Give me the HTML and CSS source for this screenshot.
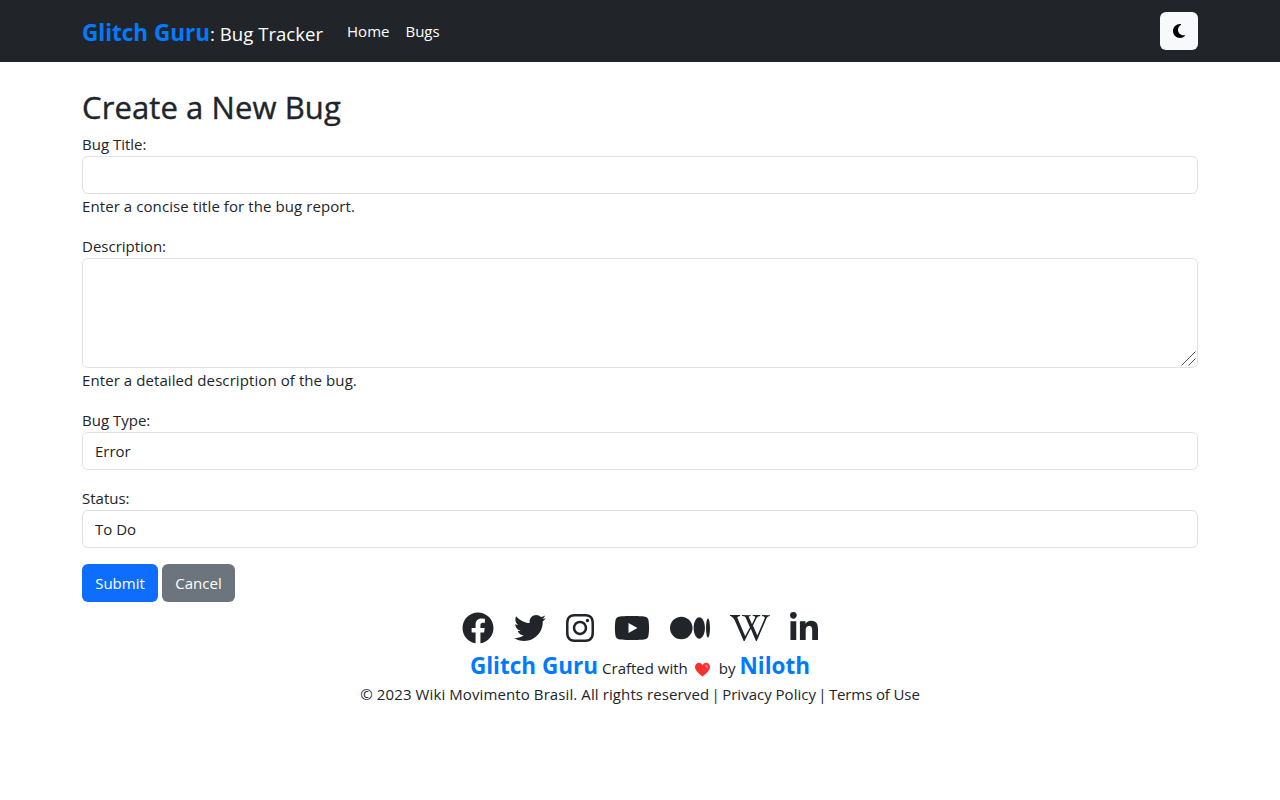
FILE: index.html
```html
<!DOCTYPE html>
<html lang="en">
<head>
<meta charset="utf-8">
<title>Glitch Guru: Bug Tracker</title>
<link rel="stylesheet" href="styles.css">
</head>
<body>
<header class="navbar">
  <div class="container nav-inner">
    <a class="brand"><span class="brand-name">Glitch Guru</span><span class="brand-sub">: Bug Tracker</span></a>
    <nav class="nav-links"><a>Home</a><a>Bugs</a></nav>
    <button class="theme-btn" type="button" aria-label="Toggle theme">
      <svg viewBox="0 0 384 512" width="12" height="16"><path d="M223.5 32C100 32 0 132.3 0 256S100 480 223.5 480c60.6 0 115.5-24.2 155.8-63.4c5-4.9 6.3-12.5 3.1-18.7s-10.1-9.7-17-8.5c-9.8 1.7-19.8 2.6-30.1 2.6c-96.9 0-175.5-78.8-175.5-176c0-65.8 36-123.1 89.3-153.3c6.1-3.5 9.2-10.5 7.7-17.3s-7.3-11.9-14.3-12.5c-6.3-.5-12.6-.8-19-.8z"/></svg>
    </button>
  </div>
</header>
<main class="container">
  <h1>Create a New Bug</h1>
  <form>
    <div class="field">
      <label for="title">Bug Title:</label>
      <input id="title" class="control" type="text">
      <div class="help">Enter a concise title for the bug report.</div>
    </div>
    <div class="field">
      <label for="desc">Description:</label>
      <div class="area-wrap">
        <textarea id="desc" class="control area"></textarea>
        <svg class="grip" viewBox="0 0 15 15" width="15" height="15"><path d="M0.500 14.500L14.500 0.500M7.500 14.500L14.500 7.500"/></svg>
      </div>
      <div class="help">Enter a detailed description of the bug.</div>
    </div>
    <div class="field">
      <label for="type">Bug Type:</label>
      <select id="type" class="control"><option>Error</option></select>
    </div>
    <div class="field">
      <label for="status">Status:</label>
      <select id="status" class="control"><option>To Do</option></select>
    </div>
    <div class="actions">
      <button class="btn submit" type="button">Submit</button>
      <button class="btn cancel" type="button">Cancel</button>
    </div>
  </form>
</main>
<footer class="footer">
  <div class="social">
    <svg viewBox="0 0 512 512" width="32" height="32"><path d="M504 256C504 119 393 8 256 8S8 119 8 256c0 123.78 90.69 226.38 209.25 245V327.69h-63V256h63v-54.64c0-62.15 37-96.48 93.67-96.48 27.14 0 55.52 4.84 55.52 4.84v61h-31.28c-30.8 0-40.41 19.12-40.41 38.73V256h68.78l-11 71.69h-57.78V501C413.31 482.38 504 379.78 504 256z"/></svg>
    <svg viewBox="0 0 512 512" width="32" height="32"><path d="M459.37 151.716c.325 4.548.325 9.097.325 13.645 0 138.72-105.583 298.558-298.558 298.558-59.452 0-114.68-17.219-161.137-47.106 8.447.974 16.568 1.299 25.34 1.299 49.055 0 94.213-16.568 130.274-44.832-46.132-.975-84.792-31.188-98.112-72.772 6.498.974 12.995 1.624 19.818 1.624 9.421 0 18.843-1.3 27.614-3.573-48.081-9.747-84.143-51.98-84.143-102.985v-1.299c13.969 7.797 30.214 12.67 47.431 13.319-28.264-18.843-46.781-51.005-46.781-87.391 0-19.492 5.197-37.36 14.294-52.954 51.655 63.675 129.3 105.258 216.365 109.807-1.624-7.797-2.599-15.918-2.599-24.04 0-57.828 46.782-104.934 104.934-104.934 30.213 0 57.502 12.67 76.67 33.137 23.715-4.548 46.456-13.32 66.599-25.34-7.798 24.366-24.366 44.833-46.132 57.827 21.117-2.273 41.584-8.122 60.426-16.243-14.292 20.791-32.161 39.308-52.628 54.253z"/></svg>
    <svg viewBox="0 0 448 512" width="28" height="32"><path d="M224.1 141c-63.6 0-114.9 51.3-114.9 114.9s51.3 114.9 114.9 114.9S339 319.5 339 255.9 287.7 141 224.1 141zm0 189.6c-41.1 0-74.7-33.5-74.7-74.7s33.5-74.7 74.7-74.7 74.7 33.5 74.7 74.7-33.6 74.7-74.7 74.7zm146.4-194.3c0 14.9-12 26.8-26.8 26.8-14.9 0-26.8-12-26.8-26.8s12-26.8 26.8-26.8 26.8 12 26.8 26.8zm76.1 27.2c-1.7-35.9-9.9-67.7-36.2-93.9-26.2-26.2-58-34.4-93.9-36.2-37-2.1-147.9-2.1-184.9 0-35.8 1.7-67.6 9.9-93.9 36.1s-34.4 58-36.2 93.9c-2.1 37-2.1 147.9 0 184.9 1.7 35.9 9.9 67.7 36.2 93.9s58 34.4 93.9 36.2c37 2.1 147.9 2.1 184.9 0 35.9-1.7 67.7-9.9 93.9-36.2 26.2-26.2 34.4-58 36.2-93.9 2.1-37 2.1-147.8 0-184.8zM398.8 388c-7.8 19.6-22.9 34.7-42.6 42.6-29.5 11.7-99.5 9-132.1 9s-102.7 2.6-132.1-9c-19.6-7.8-34.7-22.9-42.6-42.6-11.7-29.5-9-99.5-9-132.1s-2.6-102.7 9-132.1c7.8-19.6 22.9-34.7 42.6-42.6 29.5-11.7 99.5-9 132.1-9s102.7-2.6 132.1 9c19.6 7.8 34.7 22.9 42.6 42.6 11.7 29.5 9 99.5 9 132.1s2.7 102.7-9 132.1z"/></svg>
    <svg viewBox="0 0 576 512" width="36" height="32"><path d="M549.655 124.083c-6.281-23.65-24.787-42.276-48.284-48.597C458.781 64 288 64 288 64S117.22 64 74.629 75.486c-23.497 6.322-42.003 24.947-48.284 48.597-11.412 42.867-11.412 132.305-11.412 132.305s0 89.438 11.412 132.305c6.281 23.65 24.787 41.5 48.284 47.821C117.22 448 288 448 288 448s170.78 0 213.371-11.486c23.497-6.321 42.003-24.171 48.284-47.821 11.412-42.867 11.412-132.305 11.412-132.305s0-89.438-11.412-132.305zm-317.51 213.508V175.185l142.739 81.205-142.739 81.201z"/></svg>
    <svg viewBox="0 0 640 512" width="40" height="32"><path d="M180.5,74.262C80.813,74.262,0,155.633,0,256S80.819,437.738,180.5,437.738,361,356.373,361,256,280.191,74.262,180.5,74.262Zm288.25,10.646c-49.845,0-90.245,76.619-90.245,171.095s40.406,171.1,90.251,171.1,90.251-76.619,90.251-171.1H559C559,161.5,518.6,84.908,468.753,84.908Zm139.506,17.821c-17.526,0-31.735,68.628-31.735,153.274s14.2,153.274,31.735,153.274S640,340.631,640,256C640,171.351,625.785,102.729,608.259,102.729Z"/></svg>
    <svg viewBox="0 0 640 512" width="40" height="32"><path d="M640 51.2l-.3 12.2c-28.1.8-45 15.8-55.8 40.3-25 57.8-103.3 240-155.3 358.6H415l-81.9-193.1c-32.5 63.6-68.3 130-99.2 193.1-.3.3-15 0-15-.3C172 352.3 122.8 243.4 75.8 133.4 64.4 106.7 26.4 63.4.2 63.7c0-3.1-.3-10-.3-14.2h161.9v13.9c-19.2 1.1-52.8 13.3-43.3 34.2 21.9 49.7 103.6 240.3 125.6 288.6 15-29.7 57.8-109.2 75.3-142.8-13.9-28.3-58.6-133.9-72.8-160-9.7-17.8-36.1-19.4-55.8-19.7V49.8l142.5.3v13.1c-19.4.6-38.1 7.8-29.4 26.1 18.9 40 30.6 68.1 48.1 104.7 5.6-10.8 34.7-69.4 48.1-100.8 8.9-20.6-3.9-28.6-38.6-29.4.3-3.6 0-10.3.3-13.6 44.4-.3 111.1-.3 123.1-.6v13.6c-22.5.8-45.8 12.8-58.1 31.7l-59.2 122.8c6.4 16.1 63.3 142.8 69.2 156.7L559.2 91.8c-8.6-23.1-36.4-28.1-47.2-28.3V49.6l127.8 1.1.2.5z"/></svg>
    <svg viewBox="0 0 448 512" width="28" height="32"><path d="M100.28 448H7.4V148.9h92.88zM53.79 108.1C24.09 108.1 0 83.5 0 53.8a53.79 53.79 0 0 1 107.58 0c0 29.7-24.1 54.3-53.79 54.3zM447.9 448h-92.68V302.4c0-34.7-.7-79.2-48.29-79.2-48.29 0-55.69 37.7-55.69 76.7V448h-92.78V148.9h89.08v40.8h1.3c12.4-23.5 42.69-48.3 87.88-48.3 94 0 111.28 61.9 111.28 142.3V448z"/></svg>
  </div>
  <div class="credits">
    <span class="brand-name">Glitch Guru</span>
    <span>Crafted with</span>
    <svg class="heart" viewBox="0 0 16 16" width="17" height="15"><path fill="#f8312f" d="M8 15.4C5.500 13.500 0 9.300 0 5.200C0 2.500 1.900.700 4.200.700C5.900.700 7.300 1.700 8 3.200C8.700 1.700 10.100.700 11.800.700C14.100.700 16 2.500 16 5.200C16 9.300 10.500 13.500 8 15.400Z"/><ellipse cx="12.500" cy="4.500" rx="1.100" ry="2" fill="#ff7d92" transform="rotate(-30 12.500 4.500)"/></svg>
    <span>by</span>
    <span class="brand-name">Niloth</span>
  </div>
  <div class="legal"><span class="rights">© 2023 Wiki Movimento Brasil. All rights reserved</span><span class="sep">|</span><a>Privacy Policy</a><span class="sep">|</span><a class="terms">Terms of Use</a></div>
</footer>
</body>
</html>
```

FILE: styles.css
```css
* { box-sizing: border-box; }
body { margin: 0; background: #fff; color: #212529; font: 15px/24px "Segoe UI", "Open Sans", "Noto Sans", sans-serif; }
.container { width: 1116px; margin: 0 auto; }
.navbar { height: 62px; background: #212529; color: #fff; }
.nav-inner { height: 62px; display: flex; align-items: center; }
.brand { display: flex; align-items: baseline; white-space: nowrap; margin-right: 24px; padding-top: 4px; line-height: 36px; }
.brand-name { color: #007bff; font-weight: 700; font-size: 22.500px; }
.brand-sub { font-size: 18.600px; }
.nav-links { display: flex; gap: 16px; }
.theme-btn { margin-left: auto; width: 38px; height: 38px; padding: 0; border: 0; border-radius: 6px; background: #f8f9fa; display: flex; align-items: center; justify-content: center; }
h1 { margin: 0; padding: 26px 0 6px; font-size: 31px; line-height: 38px; font-weight: 500; letter-spacing: 0.1px; -webkit-text-stroke: 0.4px #212529; }
.field { margin-bottom: 16px; }
label { display: block; }
.control { display: block; width: 100%; height: 38px; padding: 6px 12px; border: 1px solid #dee2e6; border-radius: 6px; background: #fff; color: #212529; font: inherit; appearance: none; }
.area-wrap { position: relative; }
.area { height: 110px; resize: none; }
.grip { position: absolute; right: 2px; bottom: 2px; fill: none; stroke: #555; stroke-width: 1; pointer-events: none; }
.help { letter-spacing: 0.085px; }
.actions { display: flex; gap: 4px; }
.btn { height: 38px; padding: 0; border: 0; border-radius: 6px; color: #fff; font: inherit; }
.submit { width: 76px; background: #0d6efd; }
.cancel { width: 73px; background: #6c757d; }
.footer { padding-top: 10px; }
.social { display: flex; justify-content: center; gap: 20px; }
.social svg { fill: #212529; }
.credits { display: flex; justify-content: center; align-items: baseline; gap: 4px; height: 38px; line-height: 44px; }
.heart { align-self: flex-start; margin: 18px 4px 0 2px; }
.legal { display: flex; justify-content: center; }
.rights { letter-spacing: 0.1px; }
.sep { width: 13px; text-align: center; }
.terms { letter-spacing: -0.12px; }
```
